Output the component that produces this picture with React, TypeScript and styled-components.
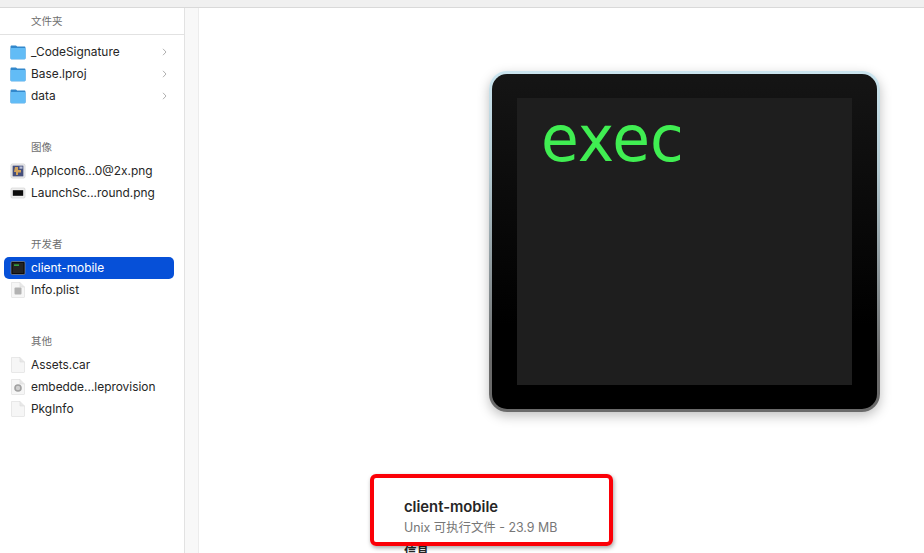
import styled, { createGlobalStyle } from "styled-components";

type RowIcon = "folder" | "app" | "launch" | "exec" | "plist" | "doc" | "gear";

interface IRow {
  name: string;
  icon: RowIcon;
  chevron?: boolean;
  selected?: boolean;
}

interface ISection {
  title: string;
  rows: IRow[];
}

const sections: ISection[] = [
  {
    title: "文件夹",
    rows: [
      { name: "_CodeSignature", icon: "folder", chevron: true },
      { name: "Base.lproj", icon: "folder", chevron: true },
      { name: "data", icon: "folder", chevron: true },
    ],
  },
  {
    title: "图像",
    rows: [
      { name: "AppIcon6...0@2x.png", icon: "app" },
      { name: "LaunchSc...round.png", icon: "launch" },
    ],
  },
  {
    title: "开发者",
    rows: [
      { name: "client-mobile", icon: "exec", selected: true },
      { name: "Info.plist", icon: "plist" },
    ],
  },
  {
    title: "其他",
    rows: [
      { name: "Assets.car", icon: "doc" },
      { name: "embedde...leprovision", icon: "gear" },
      { name: "PkgInfo", icon: "doc" },
    ],
  },
];

const GlobalStyle = createGlobalStyle`
  html, body {
    margin: 0;
    padding: 0;
    background: #fff;
    overflow: hidden;
  }
  body {
    font-family: Inter, "Noto Sans CJK SC", sans-serif;
  }
`;

const Page = styled.div`
  width: 924px;
  height: 553px;
  display: flex;
  flex-direction: column;
  overflow: hidden;
  position: relative;
`;

const TopBar = styled.div`
  height: 7px;
  flex: none;
  background: #f0f0f0;
  border-bottom: 1px solid #d9d9d9;
`;

const Body = styled.div`
  flex: 1;
  display: flex;
  min-height: 0;
`;

const Sidebar = styled.div`
  width: 184px;
  flex: none;
  border-right: 1px solid #e2e2e2;
  padding-top: 6px;
`;

const Gutter = styled.div`
  width: 13px;
  flex: none;
  background: #f8f8f8;
  border-right: 1px solid #ececec;
`;

const Section = styled.div`
  margin-bottom: 33px;
`;

const SectionTitle = styled.div<{ $ruled?: boolean }>`
  line-height: 16px;
  padding: 0 0 ${(p) => (p.$ruled ? "4px" : "0")} 31px;
  font-size: 10.5px;
  color: #6f6f6f;
  border-bottom: ${(p) => (p.$ruled ? "1px solid #e2e2e2" : "none")};
  margin-bottom: ${(p) => (p.$ruled ? "6px" : "4px")};
`;

const Row = styled.div<{ $selected?: boolean }>`
  height: 22px;
  box-sizing: border-box;
  margin: 0 10px 0 4px;
  padding: 0 7px 1px 6px;
  display: flex;
  align-items: center;
  border-radius: 5px;
  font-size: 11.9px;
  color: ${(p) => (p.$selected ? "#fff" : "#262626")};
  background: ${(p) => (p.$selected ? "#0650d8" : "transparent")};
`;

const RowIconBox = styled.svg`
  width: 16px;
  height: 16px;
  flex: none;
  margin-right: 5px;
`;

const RowName = styled.span`
  flex: 1;
  white-space: nowrap;
`;

const Preview = styled.div`
  flex: 1;
  min-width: 0;
  padding: 63px 0 0 205px;
  display: flex;
  flex-direction: column;
`;

const BigIcon = styled.div`
  width: 391px;
  height: 341px;
  flex: none;
  margin-left: 85px;
  box-sizing: border-box;
  border-radius: 18px;
  padding: 24px 25px;
  border: 3px solid transparent;
  background: linear-gradient(#151515, #000 75%) padding-box,
    linear-gradient(#cbe5ef, #b3c9d1 30%, #6a6a6a 85%) border-box;
  box-shadow: 0 4px 12px rgba(0, 0, 0, 0.25);
`;

const Screen = styled.div`
  width: 335px;
  height: 287px;
  background: #1e1e1e;
  padding-left: 24px;
  box-sizing: border-box;
  overflow: hidden;
`;

const ExecText = styled.div`
  font-family: "DejaVu Sans", sans-serif;
  font-size: 61.5px;
  line-height: 78px;
  color: #40ee52;
  transform: scaleY(1.05);
  transform-origin: 0 0;
`;

const FileInfo = styled.div`
  margin-top: 86px;
`;

const FileName = styled.div`
  font-size: 14.8px;
  line-height: 18px;
  font-weight: 600;
  color: #262626;
`;

const FileMeta = styled.div`
  margin-top: 4px;
  font-size: 12.4px;
  line-height: 16px;
  color: #777;
`;

const InfoHeading = styled.div`
  margin-top: 8px;
  font-size: 12.5px;
  line-height: 16px;
  font-weight: 600;
  color: #262626;
`;

// red annotation drawn on top of the screenshot
const Highlight = styled.div`
  position: absolute;
  left: 370px;
  top: 474px;
  width: 243px;
  height: 72px;
  box-sizing: border-box;
  border: 4px solid #fb0007;
  border-radius: 6px;
  box-shadow: 1px 2px 4px rgba(0, 0, 0, 0.35);
`;

const Icon = ({ kind }: { kind: RowIcon }) => {
  if (kind === "folder") {
    return (
      <RowIconBox viewBox="0 0 16 16">
        <path d="M0.5 2.8C0.5 2 1 1.5 1.8 1.5H6L7.2 2.6H14.2C15 2.6 15.5 3.1 15.5 3.9V14C15.5 14.8 15 15.3 14.2 15.3H1.8C1 15.3 0.5 14.8 0.5 14Z" fill="#3288cc" />
        <rect x="0.5" y="4" width="15" height="11.3" rx="1.2" fill="#62bcf6" />
      </RowIconBox>
    );
  }
  if (kind === "app") {
    return (
      <RowIconBox viewBox="0 0 16 16">
        <rect x="1" y="1" width="14" height="14" rx="1.5" fill="#f2f2f2" stroke="#c4c4c4" strokeWidth="0.6" />
        <rect x="2.6" y="2.6" width="10.8" height="10.8" fill="#46507c" />
        <path d="M5 4H8V7H11V9.5H8V12H6V9H4Z" fill="#d3a35a" />
        <rect x="9.5" y="3.5" width="3" height="2.2" fill="#b9bfd8" />
      </RowIconBox>
    );
  }
  if (kind === "launch") {
    return (
      <RowIconBox viewBox="0 0 16 16">
        <rect x="1" y="3" width="14" height="10" rx="1.2" fill="#efefef" stroke="#c4c4c4" strokeWidth="0.5" />
        <rect x="2.8" y="5.2" width="10.4" height="5.6" fill="#0c0c0c" />
      </RowIconBox>
    );
  }
  if (kind === "exec") {
    return (
      <RowIconBox viewBox="0 0 16 16">
        <rect x="1" y="1.5" width="14" height="13" rx="1.2" fill="#0c0c0c" stroke="#9a9a9a" strokeWidth="0.6" />
        <rect x="2.6" y="3" width="10.8" height="10" fill="#242424" />
        <rect x="4" y="4.6" width="5" height="1" fill="#40ee52" />
      </RowIconBox>
    );
  }
  return (
    <RowIconBox viewBox="0 0 16 16">
      <path d="M1.5 0.5H10L14.5 5V15C14.5 15.3 14.3 15.5 14 15.5H2C1.7 15.5 1.5 15.3 1.5 15Z" fill="#f6f6f6" stroke="#dcdcdc" strokeWidth="0.6" />
      <path d="M10 0.5V5H14.5" fill="#e8e8e8" stroke="#dcdcdc" strokeWidth="0.6" />
      {kind === "plist" && <rect x="4.5" y="5.5" width="7" height="7" rx="1" fill="#b2b2b2" />}
      {kind === "gear" && <circle cx="8" cy="9" r="3" fill="#cfcfcf" stroke="#a0a0a0" strokeWidth="1.6" />}
    </RowIconBox>
  );
};

const Chevron = () => (
  <svg width="5" height="8" viewBox="0 0 5 8" fill="none">
    <path d="M1 0.8L4 4L1 7.2" stroke="#b0b0b0" strokeWidth="1" />
  </svg>
);

const App = () => {
  return (
    <Page>
      <GlobalStyle />
      <TopBar />
      <Body>
        <Sidebar>
          {sections.map((section, index) => (
            <Section key={section.title}>
              <SectionTitle $ruled={index === 0}>{section.title}</SectionTitle>
              {section.rows.map((row) => (
                <Row key={row.name} $selected={row.selected}>
                  <Icon kind={row.icon} />
                  <RowName>{row.name}</RowName>
                  {row.chevron && <Chevron />}
                </Row>
              ))}
            </Section>
          ))}
        </Sidebar>
        <Gutter />
        <Preview>
          <BigIcon>
            <Screen>
              <ExecText>exec</ExecText>
            </Screen>
          </BigIcon>
          <FileInfo>
            <FileName>client-mobile</FileName>
            <FileMeta>Unix 可执行文件 - 23.9 MB</FileMeta>
            <InfoHeading>信息</InfoHeading>
          </FileInfo>
        </Preview>
      </Body>
      <Highlight />
    </Page>
  );
};

export default App;
